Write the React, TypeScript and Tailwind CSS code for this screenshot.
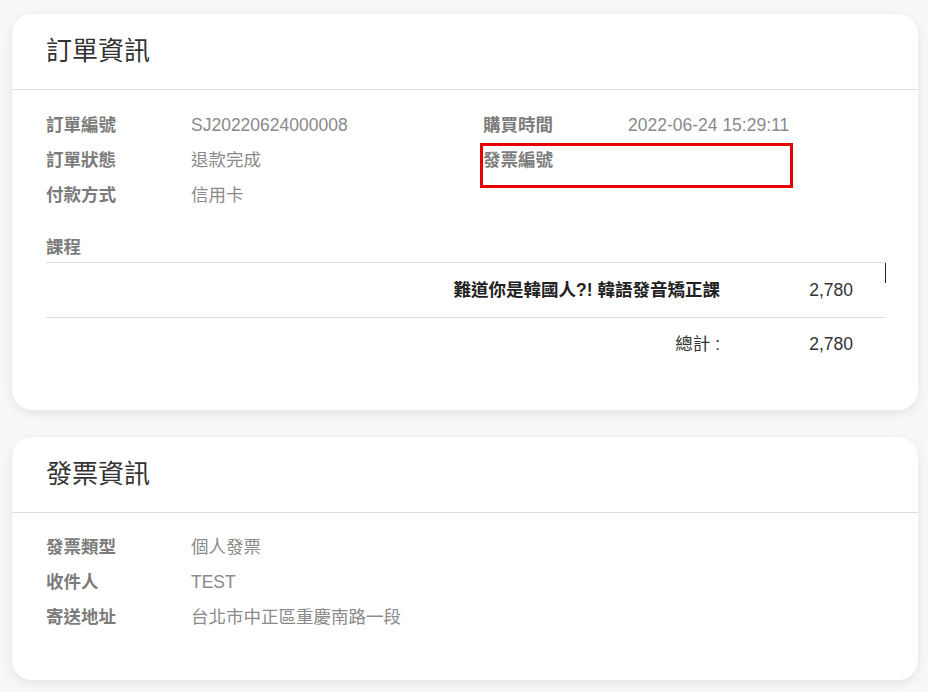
import React from "react";

type Field = {
	label: string;
	value?: string;
	highlight?: boolean;
};

const orderLeft: Field[] = [
	{ label: "訂單編號", value: "SJ20220624000008" },
	{ label: "訂單狀態", value: "退款完成" },
	{ label: "付款方式", value: "信用卡" },
];

const orderRight: Field[] = [
	{ label: "購買時間", value: "2022-06-24 15:29:11" },
	{ label: "發票編號", highlight: true },
];

const invoiceFields: Field[] = [
	{ label: "發票類型", value: "個人發票" },
	{ label: "收件人", value: "TEST" },
	{ label: "寄送地址", value: "台北市中正區重慶南路一段" },
];

const FieldRow = ({ field }: { field: Field }) => (
	<div className="relative flex h-[35px] items-center text-[17.5px]">
		<span className="w-[145px] shrink-0 font-bold text-[#7c7c7c]">{field.label}</span>
		<span className="text-[#8a8a8a]">{field.value}</span>
		{field.highlight && (
			<div className="absolute left-[-3px] top-0 h-[45px] w-[313px] border-[3px] border-[#e60000]" />
		)}
	</div>
);

const Card = ({ title, children }: { title: string; children: React.ReactNode }) => (
	<div className="rounded-[20px] bg-white shadow-[0_3px_12px_rgba(0,0,0,0.09)]">
		<div className="flex h-[76px] items-center border-b border-[#dedede] px-[34px]">
			<h2 className="text-[26px] font-normal text-[#333]">{title}</h2>
		</div>
		{children}
	</div>
);

export default function App() {
	return (
		<div
			className="min-h-screen bg-[#f8f8f8] px-[12px] pt-[14px] pb-[12px]"
			style={{ fontFamily: '"Liberation Sans", "Noto Sans CJK TC", sans-serif' }}
		>
			<div className="w-[906px] flex flex-col gap-[27px]">
				<Card title="訂單資訊">
					<div className="pl-[34px] pr-[32px] pt-[18px] pb-[39px]">
						<div className="grid grid-cols-[437px_1fr]">
							<div>
								{orderLeft.map((f) => (
									<FieldRow key={f.label} field={f} />
								))}
							</div>
							<div>
								{orderRight.map((f) => (
									<FieldRow key={f.label} field={f} />
								))}
							</div>
						</div>

						<div className="mt-[22px] border-b border-[#dcdcdc] pb-[3px] text-[17.5px] leading-[24px] font-bold text-[#7c7c7c]">
							課程
						</div>
						<div className="relative flex h-[55px] items-center border-b border-[#dcdcdc] text-[17.5px]">
							<span className="flex-1 text-right font-bold text-[#222]">
								難道你是韓國人?! 韓語發音矯正課
							</span>
							<span className="w-[166px] pr-[33px] text-right text-[#333]">2,780</span>
							<div className="absolute right-0 top-0 h-[20px] w-px bg-[#222]" />
						</div>
						<div className="flex h-[53px] items-center text-[17.5px] text-[#333]">
							<span className="flex-1 text-right">總計 :</span>
							<span className="w-[166px] pr-[33px] text-right">2,780</span>
						</div>
					</div>
				</Card>

				<Card title="發票資訊">
					<div className="pl-[34px] pr-[32px] pt-[17px] pb-[45px]">
						{invoiceFields.map((f) => (
							<FieldRow key={f.label} field={f} />
						))}
					</div>
				</Card>
			</div>
		</div>
	);
}
